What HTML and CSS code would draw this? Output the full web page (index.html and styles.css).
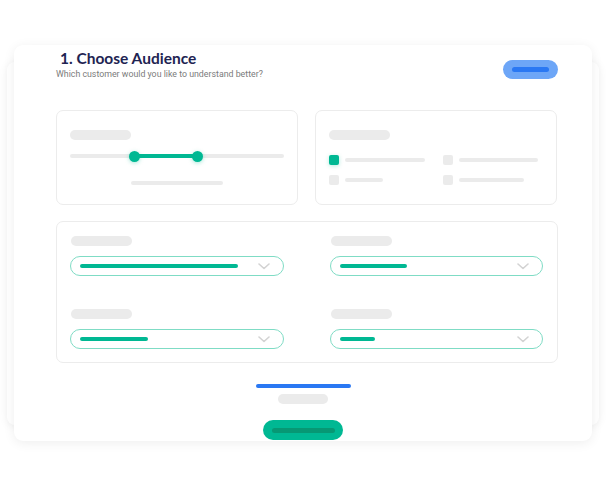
FILE: index.html
```html
<!DOCTYPE html>
<html lang="en">
<head>
<meta charset="utf-8">
<title>Choose Audience</title>
<link rel="stylesheet" href="styles.css">
</head>
<body>
<div class="stage">
  <div class="back-card"></div>
  <main class="card">
    <header class="header">
      <div class="heading">
        <h1 class="title">1. Choose Audience</h1>
        <p class="subtitle">Which customer would you like to understand better?</p>
      </div>
      <div class="btn-blue"><span class="btn-blue-bar"></span></div>
    </header>

    <section class="row">
      <div class="panel">
        <div class="pill"></div>
        <div class="slider">
          <div class="track"></div>
          <div class="fill"></div>
          <span class="thumb thumb-a"></span>
          <span class="thumb thumb-b"></span>
        </div>
        <div class="slider-label"></div>
      </div>
      <div class="panel">
        <div class="pill"></div>
        <div class="checks">
          <div class="check"><span class="box box-on"></span><span class="line" style="width:80px"></span></div>
          <div class="check"><span class="box"></span><span class="line" style="width:79px"></span></div>
          <div class="check"><span class="box"></span><span class="line" style="width:38px"></span></div>
          <div class="check"><span class="box"></span><span class="line" style="width:65px"></span></div>
        </div>
      </div>
    </section>

    <section class="panel selects">
      <div class="field">
        <div class="pill"></div>
        <div class="dropdown"><span class="bar" style="width:158px"></span><svg class="chev" viewBox="0 0 12 7" width="12" height="7"><path d="M1 1l5 4.5L11 1" fill="none" stroke="#d3d3d3" stroke-width="1.6" stroke-linecap="round" stroke-linejoin="round"/></svg></div>
      </div>
      <div class="field">
        <div class="pill"></div>
        <div class="dropdown"><span class="bar" style="width:67px"></span><svg class="chev" viewBox="0 0 12 7" width="12" height="7"><path d="M1 1l5 4.5L11 1" fill="none" stroke="#d3d3d3" stroke-width="1.6" stroke-linecap="round" stroke-linejoin="round"/></svg></div>
      </div>
      <div class="field field-low">
        <div class="pill"></div>
        <div class="dropdown"><span class="bar" style="width:68px"></span><svg class="chev" viewBox="0 0 12 7" width="12" height="7"><path d="M1 1l5 4.5L11 1" fill="none" stroke="#d3d3d3" stroke-width="1.6" stroke-linecap="round" stroke-linejoin="round"/></svg></div>
      </div>
      <div class="field field-low">
        <div class="pill"></div>
        <div class="dropdown"><span class="bar" style="width:35px"></span><svg class="chev" viewBox="0 0 12 7" width="12" height="7"><path d="M1 1l5 4.5L11 1" fill="none" stroke="#d3d3d3" stroke-width="1.6" stroke-linecap="round" stroke-linejoin="round"/></svg></div>
      </div>
    </section>

    <footer class="footer">
      <div class="blue-line"></div>
      <div class="gray-pill"></div>
      <div class="btn-green"><span class="btn-green-bar"></span></div>
    </footer>
  </main>
</div>
</body>
</html>
```

FILE: styles.css
```css
* { box-sizing: border-box; margin: 0; padding: 0; }

html, body {
  background: #ffffff;
  width: 607px;
  height: 488px;
  overflow: hidden;
}

body {
  font-family: "Lato", "Noto Sans", sans-serif;
}

.stage {
  position: relative;
  width: 607px;
  height: 488px;
  padding-top: 45px;
  padding-left: 14px;
}

.back-card {
  position: absolute;
  left: 7px;
  top: 62px;
  width: 592px;
  height: 363px;
  background: #fff;
  border-radius: 8px;
  box-shadow: 0 1px 10px rgba(0, 0, 0, 0.07);
}

.card {
  position: relative;
  width: 578px;
  height: 396px;
  background: #fff;
  border-radius: 9px;
  box-shadow: 0 2px 12px rgba(0, 0, 0, 0.07);
  padding: 4px 34px 0 42px;
}

.header {
  display: flex;
  justify-content: space-between;
  align-items: flex-start;
}

.title {
  font-size: 15.5px;
  line-height: 18px;
  font-weight: 700;
  color: #1e2452;
  margin-left: 4px;
}

.subtitle {
  font-family: "Roboto", "Liberation Sans", sans-serif;
  font-size: 8.8px;
  line-height: 12px;
  color: #7b7b7b;
  margin-top: 1px;
}

.btn-blue {
  margin-top: 11px;
  width: 55px;
  height: 19px;
  border-radius: 10px;
  background: #6da6f7;
  display: flex;
  align-items: center;
  justify-content: center;
}

.btn-blue-bar {
  width: 37px;
  height: 5px;
  border-radius: 3px;
  background: #2a78f3;
}

.row {
  margin-top: 30px;
  display: grid;
  grid-template-columns: 1fr 1fr;
  gap: 17px;
  width: 501px;
}

.panel {
  border: 1px solid #ececec;
  border-radius: 7px;
  padding: 19px 13px 0;
  height: 95px;
}

.pill {
  width: 61px;
  height: 10px;
  border-radius: 5px;
  background: #ebebeb;
}

.slider {
  position: relative;
  margin-top: 10px;
  height: 12px;
}

.track {
  position: absolute;
  left: 0;
  right: 0;
  top: 4px;
  height: 4px;
  border-radius: 2px;
  background: #ebebeb;
}

.fill {
  position: absolute;
  left: 64px;
  width: 63px;
  top: 4px;
  height: 4px;
  background: #00b893;
}

.thumb {
  position: absolute;
  top: 1px;
  width: 11px;
  height: 11px;
  border-radius: 50%;
  background: #00b893;
  box-shadow: 0 1px 4px rgba(0, 184, 147, 0.35);
}

.thumb-a { left: 58.5px; }
.thumb-b { left: 121.5px; }

.slider-label {
  margin: 19px auto 0;
  width: 92px;
  height: 4px;
  border-radius: 2px;
  background: #ebebeb;
}

.checks {
  margin-top: 15px;
  display: grid;
  grid-template-columns: 114px 1fr;
  row-gap: 10px;
}

.check {
  display: flex;
  align-items: center;
  gap: 6px;
}

.box {
  width: 10px;
  height: 10px;
  border-radius: 2px;
  background: #ebebeb;
  flex: none;
}

.box-on {
  background: #00b893;
  box-shadow: 0 1px 4px rgba(0, 184, 147, 0.3);
}

.line {
  height: 4px;
  border-radius: 2px;
  background: #ebebeb;
}

.selects {
  margin-top: 16px;
  height: 142px;
  width: 502px;
  padding: 14px 14px 0 13px;
  display: grid;
  grid-template-columns: 1fr 1fr;
  column-gap: 46px;
  align-content: start;
}

.field .pill { margin-left: 1px; }

.field-low { margin-top: 33px; }

.dropdown {
  margin-top: 10px;
  height: 20px;
  border: 1px solid #7fdcc5;
  border-radius: 10px;
  display: flex;
  align-items: center;
  justify-content: space-between;
  padding: 0 13px 0 9px;
}

.bar {
  height: 4px;
  border-radius: 2px;
  background: #00b893;
}

.chev { display: block; }

.footer {
  display: flex;
  flex-direction: column;
  align-items: center;
  padding-right: 8px;
  margin-top: 21px;
}

.blue-line {
  width: 95px;
  height: 4px;
  border-radius: 2px;
  background: #2a78f3;
}

.gray-pill {
  margin-top: 6px;
  width: 50px;
  height: 10px;
  border-radius: 5px;
  background: #ebebeb;
}

.btn-green {
  margin-top: 16px;
  width: 80px;
  height: 20px;
  border-radius: 10px;
  background: #00b893;
  display: flex;
  align-items: center;
  justify-content: center;
}

.btn-green-bar {
  width: 63px;
  height: 5px;
  border-radius: 3px;
  background: #079874;
}
```
